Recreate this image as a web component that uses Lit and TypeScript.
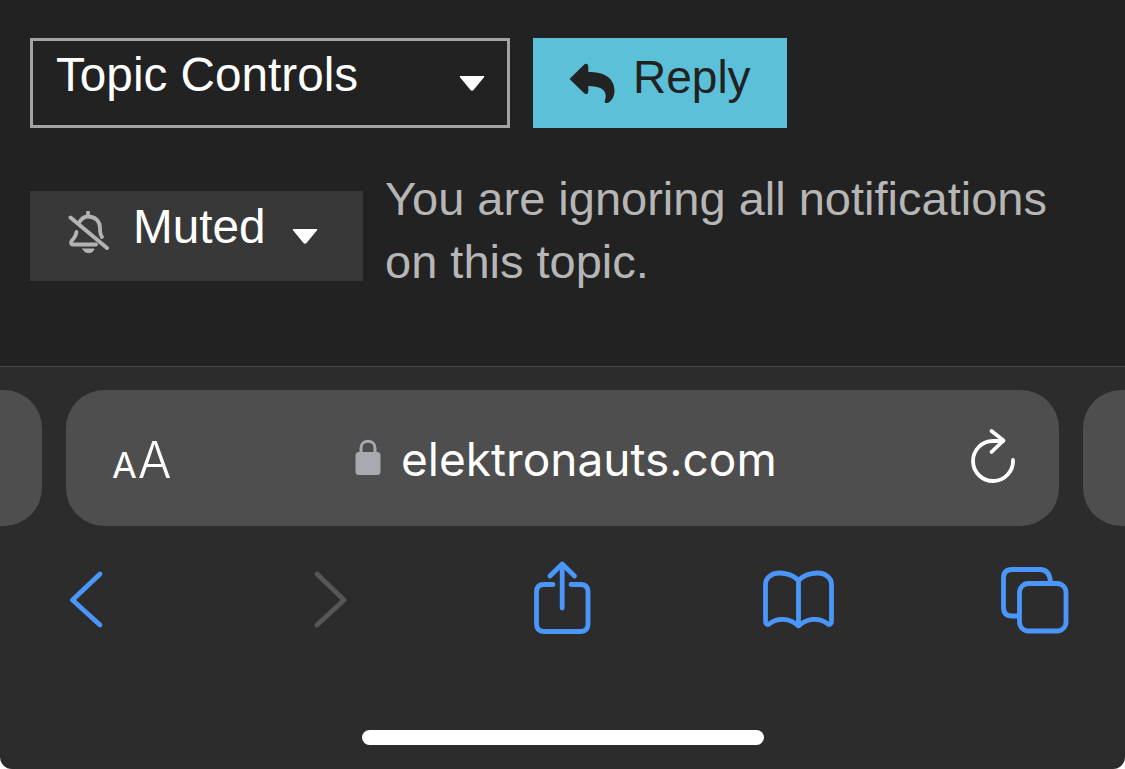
import { LitElement, html, css } from "lit";
import { customElement } from "lit/decorators.js";

@customElement("app-root")
export class AppRoot extends LitElement {
  static styles = css`
    :host { display: block; width: 1125px; height: 769px; background: #fff; overflow: hidden; font-family: "Liberation Sans", Arial, sans-serif; }
    .screen { height: 769px; background: #2c2c2c; border-radius: 0 0 12px 12px; overflow: hidden; display: flex; flex-direction: column; }
    .page { height: 366px; box-sizing: border-box; background: #222; padding: 38px 0 0 30px; flex: none; }
    .actions { display: flex; gap: 23px; }
    .select { width: 480px; height: 90px; box-sizing: border-box; border: 3px solid #a3a3a3; display: flex; padding: 0 22px 0 23px; justify-content: space-between; color: #fff; font-size: 47.7px; line-height: 67px; }
    .caret { width: 26px; height: 17px; flex: none; }
    .select .caret { margin-top: 34px; }
    .reply { width: 254px; height: 90px; background: #5bc0d8; color: #222; font-size: 46px; display: flex; align-items: center; padding-left: 36px; box-sizing: border-box; gap: 18px; line-height: 80px; }
    .reply span { margin-bottom: 12px; }
    .reply svg { width: 46px; height: 40px; flex: none; }
    .status { display: flex; margin-top: 40px; gap: 22px; }
    .muted { margin-top: 23px; width: 333px; height: 90px; background: #383838; color: #fff; font-size: 47.7px; display: flex; align-items: center; padding-left: 38px; box-sizing: border-box; line-height: 74px; }
    .muted .bell { width: 42px; height: 44px; flex: none; margin-right: 23px; margin-top: -6px; }
    .muted .caret { margin-left: 26px; margin-top: 0; }
    .muted span { margin-bottom: 18px; }
    .note { color: #b6b6b6; font-size: 47px; line-height: 63px; width: 720px; margin-top: -1px; }
    .chrome { flex: 1; border-top: 1px solid #484848; display: flex; flex-direction: column; }
    .tabs { display: flex; gap: 24px; margin: 23px 0 0 -100px; height: 136px; flex: none; }
    .pill { background: #4e4e4e; border-radius: 38px; flex: none; }
    .pill.side { width: 142px; }
    .pill.main { width: 993px; display: flex; align-items: center; color: #fff; }
    .aa { margin-left: 46px; display: flex; align-items: baseline; font-family: Inter, sans-serif; color: #fff; width: 243px; margin-top: 4px; }
    .aa .s { font-size: 36px; margin-right: 1px; }
    .aa .l { font-size: 50px; font-weight: 300; }
    .lock { width: 26px; height: 38px; flex: none; margin-right: 20px; margin-bottom: 2px; }
    .url { font-family: Inter, sans-serif; font-size: 46px; flex: 1; line-height: 60px; margin-top: 1px; }
    .reload { width: 50px; height: 56px; flex: none; margin-right: 39px; margin-top: -4px; }
    .tools { display: flex; justify-content: space-between; margin: 34px 51px 0 46px; height: 80px; }
    .tools svg { width: 80px; height: 80px; fill: none; stroke: #4a96fb; stroke-width: 4.8; stroke-linecap: round; stroke-linejoin: round; }
    .tools svg.off { stroke: #565656; }
    .home { width: 402px; height: 15px; background: #fff; border-radius: 8px; margin: 90px 0 0 362px; }
  `;

  render() {
    const caret = html`<svg class="caret" viewBox="0 0 26 17"><path d="M1.5 1 H24.5 Q26 1 25 2.3 L14.5 15 Q13 16.5 11.5 15 L1 2.3 Q0 1 1.5 1 Z" fill="#fff"/></svg>`;
    return html`
      <div class="screen">
        <div class="page">
          <div class="actions">
            <div class="select"><span>Topic Controls</span>${caret}</div>
            <div class="reply">
              <svg viewBox="570 62 46 40"><path fill="#222" d="M570.5 78 L585.5 63.3 Q589 61.5 589.3 66 L589.3 71 C 604 71 615.5 76 615.5 90 C615.5 97 611 101.5 608 102 Q605 102.5 606 99.5 C 609 90 603 85 589.3 85 L589.3 90 Q589 94.5 585.5 92.5 Z"/></svg>
              <span>Reply</span>
            </div>
          </div>
          <div class="status">
            <div class="muted">
              <svg class="bell" viewBox="68 211 42 44" fill="none" stroke="#b3b3b3" stroke-width="3.8" stroke-linecap="round" stroke-linejoin="round">
                <path d="M88 212.5 V216"/>
                <path d="M79.5 222 C82 218 85 216.5 88 216.5 C95 216.5 100 221 100 228 C100 232 100.5 235 102 237"/>
                <path d="M76.5 232 C76 236 74 238.5 71.5 241 C70.5 243 71 244.5 73 244.5 H96"/>
                <path d="M70.5 217.5 L107 248" stroke-width="4"/>
                <path d="M83 249 H94 C93 254 84.5 254 83 249 Z" fill="#b3b3b3" stroke-width="1"/>
              </svg>
              <span>Muted</span>${caret}
            </div>
            <div class="note">You are ignoring all notifications<br />on this topic.</div>
          </div>
        </div>
        <div class="chrome">
          <div class="tabs">
            <div class="pill side"></div>
            <div class="pill main">
              <div class="aa"><span class="s">A</span><span class="l">A</span></div>
              <svg class="lock" viewBox="0 0 26 38"><path d="M6 17 V10 C6 1 20 1 20 10 V17" fill="none" stroke="#a9a9b0" stroke-width="3"/><rect x="0.5" y="14" width="25" height="23" rx="3.5" fill="#a9a9b0"/></svg>
              <span class="url">elektronauts.com</span>
              <svg class="reload" viewBox="970 428 50 56" fill="none" stroke="#fff" stroke-width="3.8" stroke-linecap="round" stroke-linejoin="round">
                <path d="M1013 460 A20 20 0 1 1 993 441 L1003 441"/>
                <path d="M991.5 431 L1003.5 440.500 L991.500 452"/>
              </svg>
            </div>
            <div class="pill side"></div>
          </div>
          <div class="tools">
            <svg viewBox="46 561 80 80"><path d="M100 575 L72.5 601 L100 626"/></svg>
            <svg class="off" viewBox="283 561 80 80"><path d="M317 575 L344 601 L317 626"/></svg>
            <svg viewBox="520 561 80 80">
              <path d="M553 585.5 H544 Q536.5 585.5 536.5 593 V625 Q536.5 632.5 544 632.5 H580.5 Q588 632.5 588 625 V593 Q588 585.5 580.5 585.5 H571"/>
              <path d="M562.2 566 V609"/><path d="M550 577 L562.2 565 L574.5 577"/>
            </svg>
            <svg viewBox="757 561 80 80">
              <path d="M798.5 582 C794 575 777 571 770 577 C767 579 765.500 582 765.500 586 V622 C765.500 625 767.500 626 769 625 C778 618 790 619 798.500 627 C807 619 819 618 828 625 C829.500 626 831.500 625 831.500 622 V586 C831.500 582 830 579 827 577 C820 571 803 575 798.500 582 V625"/>
            </svg>
            <svg viewBox="994 561 80 80">
              <path d="M1018 617 H1012 Q1003.500 617 1003.500 608.500 V579 Q1003.500 570.500 1012 570.500 H1040 Q1049.500 570.500 1050.500 583"/>
              <rect x="1019.500" y="584.500" width="46.500" height="47.500" rx="9"/>
            </svg>
          </div>
          <div class="home"></div>
        </div>
      </div>
    `;
  }
}
